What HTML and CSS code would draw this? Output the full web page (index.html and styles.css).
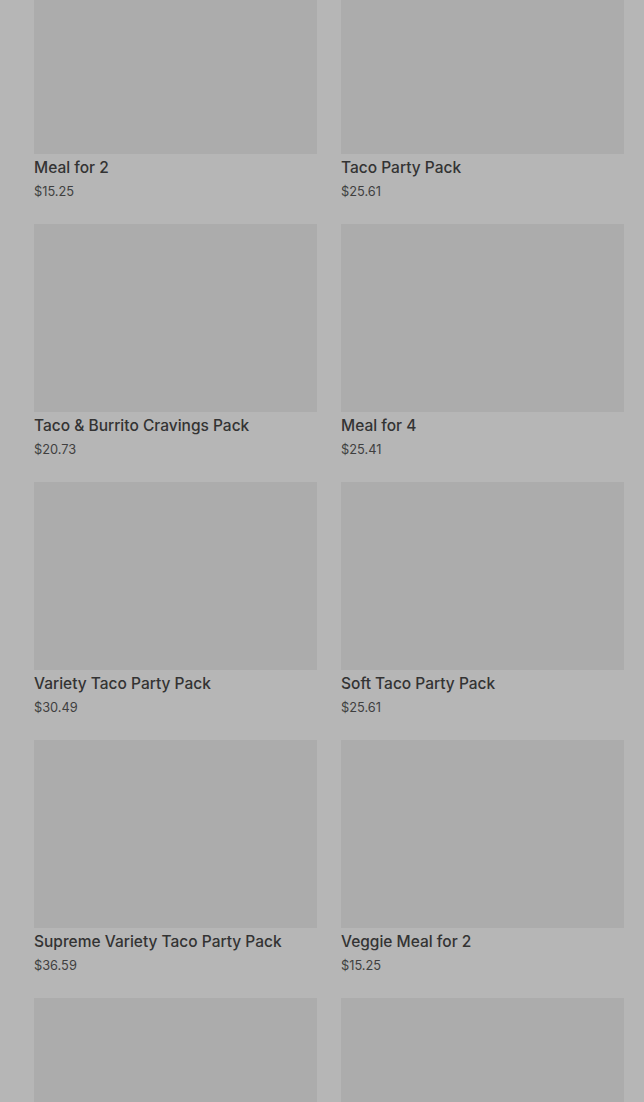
FILE: index.html
```html
<!DOCTYPE html>
<html>
<head>
<meta charset="utf-8">
<link rel="stylesheet" href="styles.css">
</head>
<body>
<main class="grid">
  <div class="card"><div class="thumb"></div><div class="title">Meal for 2</div><div class="price">$15.25</div></div>
  <div class="card"><div class="thumb"></div><div class="title">Taco Party Pack</div><div class="price">$25.61</div></div>
  <div class="card"><div class="thumb"></div><div class="title">Taco &amp; Burrito Cravings Pack</div><div class="price">$20.73</div></div>
  <div class="card"><div class="thumb"></div><div class="title">Meal for 4</div><div class="price">$25.41</div></div>
  <div class="card"><div class="thumb"></div><div class="title">Variety Taco Party Pack</div><div class="price">$30.49</div></div>
  <div class="card"><div class="thumb"></div><div class="title">Soft Taco Party Pack</div><div class="price">$25.61</div></div>
  <div class="card"><div class="thumb"></div><div class="title">Supreme Variety Taco Party Pack</div><div class="price">$36.59</div></div>
  <div class="card"><div class="thumb"></div><div class="title">Veggie Meal for 2</div><div class="price">$15.25</div></div>
  <div class="card"><div class="thumb"></div></div>
  <div class="card"><div class="thumb"></div></div>
</main>
</body>
</html>
```
FILE: styles.css
```css
html, body {
  margin: 0;
  padding: 0;
  background: #b6b6b6;
  height: 1102px;
  overflow: hidden;
}
.grid {
  display: grid;
  grid-template-columns: 283px 283px;
  column-gap: 24px;
  row-gap: 22px;
  padding: 0 20px 0 34px;
  margin-top: -34px;
  font-family: Inter, "Noto Sans", sans-serif;
}
.thumb {
  height: 188px;
  background: #acacac;
}
.title {
  margin-top: 2px;
  font-size: 15.5px;
  line-height: 24px;
  font-weight: 500;
  color: #333333;
}
.price {
  margin-top: 2px;
  font-size: 12.8px;
  line-height: 20px;
  color: #3f3f3f;
}
```
